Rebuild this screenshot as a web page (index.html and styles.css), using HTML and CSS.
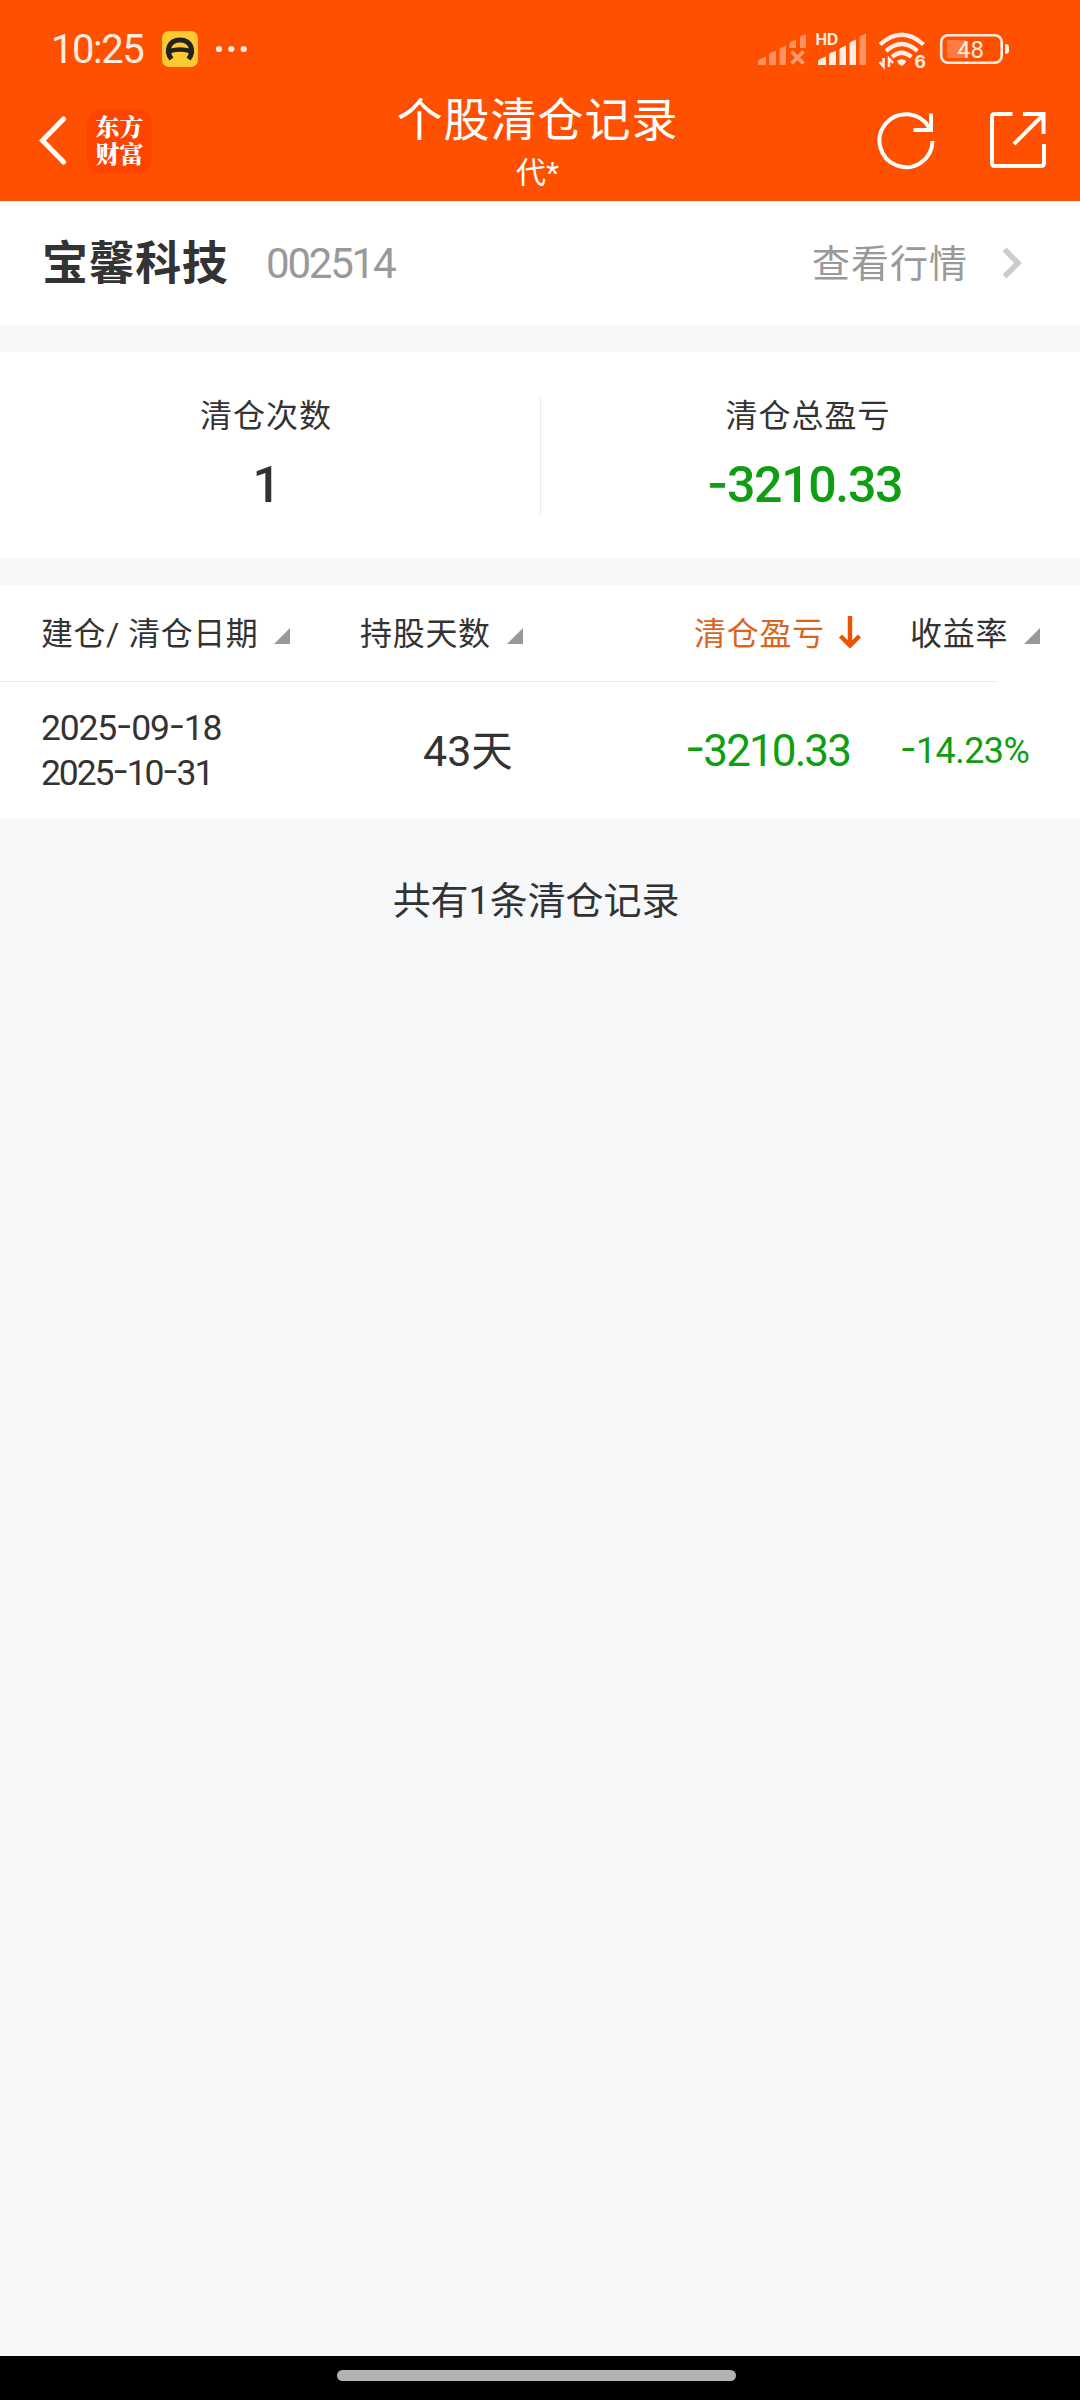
FILE: index.html
```html
<!DOCTYPE html>
<html lang="zh-CN">
<head>
<meta charset="utf-8">
<title>个股清仓记录</title>
<link rel="stylesheet" href="styles.css">
</head>
<body>
<header class="header">
  <div class="status">
    <span class="time">10:25</span>
    <svg class="app" width="36" height="36" viewBox="0 0 36 36"><rect width="36" height="36" rx="7" fill="#ffc933"/><path d="M9.500 28C3 20 7 9 18 9s15 11 8.500 19" fill="none" stroke="#222" stroke-width="5"/><path d="M8 20q10-3 20 0" fill="none" stroke="#222" stroke-width="4.500"/></svg>
    <svg class="dots" width="32" height="8" viewBox="0 0 32 8"><g fill="#fff" fill-opacity=".9"><circle cx="4" cy="4" r="3.1"/><circle cx="16.3" cy="4" r="3.1"/><circle cx="28.7" cy="4" r="3.1"/></g></svg>
    <svg class="system" width="254" height="42" viewBox="756 28 254 42">
      <g fill="#fff" fill-opacity=".38">
        <path d="M758 65v-3q0-2 2-3l6-2.500v8.500zM769 65V55q0-2 2-2.500l5-1.500v14zM779.500 65V50q0-2 2-2.500l4.500-2v19.500zM789.500 48v-4q0-2 2-2.500l4.500-2v8.500zM800 48V38q0-2 2-2.500l4-1.500v14z"/>
        <path d="M859.500 65V38q0-2 2-2.500l4.500-2v31.500z"/>
      </g>
      <path d="M791.500 51.500l12 12m0-12l-12 12" stroke="#ff9b6b" stroke-width="3.800"/>
      <path fill="#ffece2" d="M818 65v-3q0-2 2-3l6-2.500v8.500zM829 65V55q0-2 2-2.500l5-1.500v14zM839.500 65V50q0-2 2-2.500l4.500-2v19.500zM849.500 65V44q0-2 2-2.500l4.500-2v25.500z"/>
      <text class="hd" x="815.500" y="45">HD</text>
      <g fill="none" stroke="#ffece2" stroke-width="4.300">
        <path d="M880 44.500Q901.700 25 923.500 44.500"/><path d="M886 51Q901.700 37 917.500 51"/><path d="M892 57Q901.700 48.500 911.500 57"/>
      </g>
      <path fill="#ffece2" d="M897 61q4.700-3.500 9.400 0-1.200 3.500-4.700 5-3.500-1.500-4.700-5z"/>
      <path fill="none" stroke="#ffece2" stroke-width="2.500" d="M883.500 58v8.500l-4-4.500M889 67v-8.500l4 4.500"/>
      <text class="six" x="914.500" y="67.500">6</text>
      <rect x="941.200" y="35.200" width="60.500" height="27.600" rx="7" fill="none" stroke="#ffece2" stroke-width="2.600"/>
      <path d="M949 40h17v18h-17q-2 0-2-2V42q0-2 2-2z" fill="#fff" fill-opacity=".25"/>
      <path d="M1005 44q4 0 4 3v4q0 3-4 3z" fill="#ffece2"/>
      <text class="battery" x="957" y="57.500">48</text>
    </svg>
  </div>
  <nav class="nav">
    <div class="nav-left">
      <svg width="30" height="52" viewBox="0 0 30 52"><path d="M26.500 4L5.500 25.500l21 21.500" fill="none" stroke="#fff" stroke-width="5" stroke-linecap="round"/></svg>
      <div class="brand">东方<br>财富</div>
    </div>
    <div class="nav-title"><h1>个股清仓记录</h1><p>代*</p></div>
    <div class="nav-right">
      <svg width="60" height="60" viewBox="0 0 60 60"><path d="M56.500 30A26.500 26.500 0 1 1 53 16.500M55 2.500V19H37.500" fill="none" stroke="#fff" stroke-width="4"/></svg>
      <svg width="60" height="60" viewBox="0 0 60 60"><path d="M24.500 3H7Q4 3 4 6v46q0 3 3 3h46q3 0 3-3V33M35 3h20.500v20M54.500 4.500L26 33" fill="none" stroke="#fff" stroke-width="4"/></svg>
    </div>
  </nav>
</header>
<main>
  <section class="stock">
    <h2>宝馨科技</h2><span class="code">002514</span>
    <span class="quote">查看行情</span>
    <svg width="20" height="32" viewBox="0 0 20 32"><path d="M2.500 2.500L16 16 2.500 29.500" fill="none" stroke="#ccc" stroke-width="5.500"/></svg>
  </section>
  <section class="summary">
    <div class="stat"><span class="label">清仓次数</span><strong>1</strong></div>
    <div class="stat profit"><span class="label">清仓总盈亏</span><strong class="down"><i class="minus">-</i>3210.33</strong></div>
  </section>
  <section class="records">
    <div class="cols head">
      <div class="c1">建仓/ 清仓日期<svg class="tri" width="16" height="16" viewBox="0 0 16 16"><path d="M16 0v16H0z"/></svg></div>
      <div class="c2">持股天数<svg class="tri" width="16" height="16" viewBox="0 0 16 16"><path d="M16 0v16H0z"/></svg></div>
      <div class="c3 active">清仓盈亏<svg class="arrow" width="24" height="32" viewBox="0 0 24 32"><path d="M12 0v29M2.500 20L12 29.500 21.500 20" fill="none" stroke="#ea5504" stroke-width="4.500"/></svg></div>
      <div class="c4">收益率<svg class="tri" width="16" height="16" viewBox="0 0 16 16"><path d="M16 0v16H0z"/></svg></div>
    </div>
    <hr>
    <div class="cols row">
      <div class="c1 dates"><span>2025<i class="minus">-</i>09<i class="minus">-</i>18</span><span class="closed">2025<i class="minus">-</i>10<i class="minus">-</i>31</span></div>
      <div class="c2 days">43<b>天</b></div>
      <div class="c3 amount down"><i class="minus">-</i>3210.33</div>
      <div class="c4 rate down"><i class="minus">-</i>14.23%</div>
    </div>
  </section>
  <p class="total">共有1条清仓记录</p>
</main>
<footer class="gesture"><div class="pill"></div></footer>
</body>
</html>
```
FILE: styles.css
```css
* { box-sizing: border-box; margin: 0; padding: 0; }
body {
  width: 1080px; height: 2400px;
  display: flex; flex-direction: column;
  background: #f7f8fa; color: #333;
  font-family: Roboto, "Noto Sans CJK SC", sans-serif;
}
svg { display: block; flex: none; }
i { font-style: normal; }
.minus { font-family: Inter, sans-serif; line-height: 1; vertical-align: .06em; }
.down { color: #0f9d12; }

.header { height: 201px; background: #ff5000; color: #fff; }
.status { height: 98px; display: flex; align-items: center; padding: 0 70px 0 51px; }
.time { width: 111px; font-size: 40px; line-height: 48px; letter-spacing: -1.5px; color: #ffece2; padding-top: 2px; }
.dots { margin-left: 17px; }
.system { margin-left: auto; }
.hd { font: 700 15.5px Inter, sans-serif; fill: #ffece2; }
.six { font: 700 17.5px Inter, sans-serif; fill: #ffece2; }
.battery { font: 400 24px Roboto, sans-serif; fill: #ffece2; }

.nav { height: 103px; display: grid; grid-template-columns: 360px 1fr 360px; }
.nav-left { display: flex; align-items: center; padding: 0 0 17px 37px; }
.brand {
  width: 65px; height: 65px; margin-left: 20px; padding-top: 3px; border-radius: 14px; background: #ff4400;
  text-align: center;
  font: 900 24px/27px "Noto Serif CJK SC", "Noto Sans CJK SC", sans-serif;
}
.nav-title { text-align: center; padding-right: 5px; }
.nav-title h1 { font-size: 46px; font-weight: 400; line-height: 44px; letter-spacing: 1px; white-space: nowrap; }
.nav-title p { font-size: 30px; line-height: 30px; margin-top: 16px; }
.nav-right { display: flex; align-items: center; justify-content: flex-end; gap: 52px; padding: 0 32px 17px 0; }

.stock { height: 124px; background: #fff; display: flex; align-items: center; padding: 0 58px 0 42px; }
.stock h2 { width: 224px; font-size: 46px; line-height: 60px; font-weight: 700; letter-spacing: .6px; }
.code { font-size: 42px; color: #999; letter-spacing: -2.2px; padding-top: 1px; }
.quote { margin-left: auto; margin-right: 34px; font-size: 38px; line-height: 50px; letter-spacing: 1px; color: #999; padding-top: 1px; }

.summary { height: 206px; margin-top: 27px; background: #fff; display: grid; grid-template-columns: 540px 540px; padding: 44px 0 32px; }
.stat { height: 118px; display: flex; flex-direction: column; align-items: center; padding-right: 8px; }
.stat.profit { border-left: 1px solid #ebebeb; padding-right: 5px; }
.label { font-size: 32px; line-height: 40px; letter-spacing: 1px; }
.stat strong { font-size: 50px; line-height: 58px; font-weight: 500; margin-top: 20px; letter-spacing: -1.3px; }
.stat.profit strong { padding-right: 7px; }
.stat .minus { font-weight: 600; font-size: 46px; }

.records { height: 234px; margin-top: 27px; background: #fff; }
.cols { display: grid; grid-template-columns: 360px 328px 222px 170px; align-items: center; }
.cols > div { white-space: nowrap; }
.head { height: 96px; font-size: 32px; letter-spacing: .7px; }
.head > div { display: flex; align-items: center; padding-bottom: 4px; }
.c1 { padding-left: 41px; }
.head .c1 { letter-spacing: .5px; }
.head .c3 { padding-left: 6px; color: #d96520; }
.tri { margin: 9px 0 0 16px; fill: #999; }
.arrow { margin: 2px 0 0 13px; }
hr { width: 998px; height: 1px; border: 0; background: #ebebeb; }
.row { height: 137px; }
.dates { display: flex; flex-direction: column; font-size: 35.5px; line-height: 45px; letter-spacing: -1.2px; }
.dates .closed { letter-spacing: -2.1px; }
.days { padding: 0 0 5px 63px; font-size: 43px; }
.days b { font-weight: 400; font-size: 41.5px; }
.amount { font-size: 44px; letter-spacing: -1.9px; margin-left: -3px; }
.rate { font-size: 36px; letter-spacing: -.6px; margin-left: -10px; padding-top: 1px; }

.total { margin-top: 57px; text-align: center; font-size: 38px; line-height: 50px; letter-spacing: -.1px; padding-right: 8px; }
.gesture { height: 44px; margin-top: auto; background: #000; padding: 14px 0 0 337px; }
.pill { width: 399px; height: 11px; border-radius: 6px; background: #b3b3b3; }
```
